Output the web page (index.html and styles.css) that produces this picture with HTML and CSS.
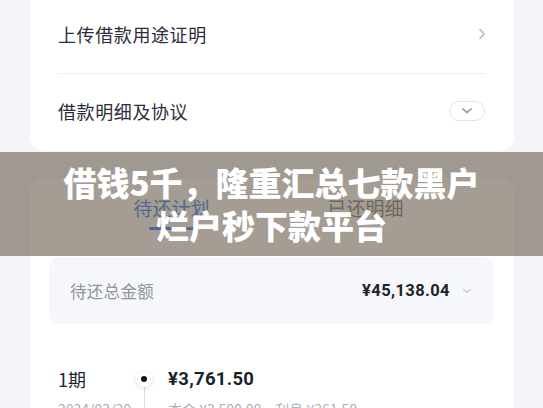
FILE: index.html
```html
<!DOCTYPE html>
<html lang="zh-CN">
<head>
<meta charset="utf-8">
<title>借款详情</title>
<link rel="stylesheet" href="styles.css">
</head>
<body>
<div class="page">
  <section class="card card-top">
    <div class="row row-first">
      <span class="row-label">上传借款用途证明</span>
      <svg class="chev-right" width="8" height="12" viewBox="0 0 8 12"><path d="M2 1.5 L6 6 L2 10.5" fill="none" stroke="#b8bcc7" stroke-width="1.6" stroke-linecap="round" stroke-linejoin="round"/></svg>
    </div>
    <div class="row row-second">
      <span class="row-label">借款明细及协议</span>
      <span class="pill"><svg width="12" height="8" viewBox="0 0 12 8"><path d="M2 2 L6 5.5 L10 2" fill="none" stroke="#a2a7b4" stroke-width="2" stroke-linecap="round" stroke-linejoin="round"/></svg></span>
    </div>
  </section>

  <section class="card card-plan">
    <div class="tabs">
      <div class="tab tab-active">待还计划<span class="tab-bar"></span></div>
      <div class="tab">已还明细</div>
    </div>
    <div class="summary">
      <span class="summary-label">待还总金额</span>
      <span class="summary-value">¥45,138.04
        <svg class="chev-down" width="10" height="6" viewBox="0 0 10 6"><path d="M1.5 1.5 L5 4.3 L8.5 1.5" fill="none" stroke="#c9cdd6" stroke-width="1.4" stroke-linecap="round" stroke-linejoin="round"/></svg>
      </span>
    </div>
    <div class="period">
      <div class="period-name">1期</div>
      <div class="period-axis"><span class="dot-ring"><span class="dot"></span></span><span class="axis-line"></span></div>
      <div class="period-amount">¥3,761.50</div>
      <div class="period-date">2024/03/20</div>
      <div class="period-detail"><span>本金 ¥3,500.00</span><span>利息 ¥261.50</span></div>
    </div>
  </section>
</div>

<div class="banner">
  <div class="banner-line">借钱5千，隆重汇总七款黑户</div>
  <div class="banner-line">烂户秒下款平台</div>
</div>
</body>
</html>
```

FILE: styles.css
```css
* { box-sizing: border-box; }

html, body {
  margin: 0;
  padding: 0;
  background: #f3f5f9;
  font-family: "Noto Sans CJK SC", "Noto Sans", sans-serif;
  overflow: hidden;
}

.page {
  padding: 0 29px 0 30px;
}

.card {
  background: #ffffff;
}

.card-top {
  border-radius: 0 0 14px 14px;
  padding: 0 29px 0 28px;
}

.row {
  display: flex;
  align-items: center;
  justify-content: space-between;
}

.row-first {
  height: 74px;
  padding-bottom: 6px;
  border-bottom: 1px solid #eceef2;
}

.row-second {
  height: 77px;
  padding-bottom: 3px;
}

.row-label {
  font-size: 18px;
  letter-spacing: 0.6px;
  color: #2a2e3b;
  line-height: 24px;
}

.chev-right {
  margin-right: -1px;
}

.pill {
  width: 36px;
  height: 20px;
  border: 1px solid #e1e3ea;
  border-radius: 10px;
  display: flex;
  align-items: center;
  justify-content: center;
}

.card-plan {
  margin-top: 27px;
  border-radius: 14px;
  padding: 0 20px 0 19px;
  height: 260px;
}

.tabs {
  display: flex;
  justify-content: center;
  padding: 20px 0 27px 0;
  margin-left: -6px;
}

.tab {
  width: 194px;
  display: flex;
  flex-direction: column;
  align-items: center;
  font-size: 19px;
  line-height: 20px;
  color: #70757e;
}

.tab-active {
  color: #2a7cf2;
}

.tab-bar {
  margin-top: 9px;
  width: 46px;
  height: 3px;
  border-radius: 2px;
  background: #2a7cf2;
}

.summary {
  height: 67px;
  background: #f6f7fa;
  border-radius: 10px;
  padding: 0 22px 0 21px;
  display: flex;
  align-items: center;
  justify-content: space-between;
}

.summary-label {
  font-size: 16.5px;
  color: #8f939c;
  letter-spacing: 0.3px;
}

.summary-value {
  font-family: "Roboto", "Liberation Sans", sans-serif;
  font-weight: 700;
  font-size: 16.5px;
  letter-spacing: 0.4px;
  color: #1f2229;
  display: flex;
  align-items: center;
  gap: 12px;
}

.period {
  margin-top: 41px;
  padding-left: 9px;
  display: grid;
  grid-template-columns: 76px 20px 1fr;
  grid-template-rows: 28px 20px;
  row-gap: 6px;
  align-items: center;
}

.period-name {
  font-size: 18px;
  color: #23262e;
}

.period-axis {
  grid-column: 2;
  grid-row: 1 / span 2;
  align-self: stretch;
  position: relative;
  display: flex;
  justify-content: center;
  align-items: flex-start;
  padding-top: 6px;
}

.dot-ring {
  width: 16px;
  height: 16px;
  border-radius: 50%;
  background: #fff;
  box-shadow: 0 1px 4px rgba(60, 80, 120, 0.2);
  display: flex;
  align-items: center;
  justify-content: center;
  position: relative;
  z-index: 1;
}

.dot {
  width: 6px;
  height: 6px;
  border-radius: 50%;
  background: #111318;
}

.axis-line {
  position: absolute;
  left: 9.5px;
  top: 14px;
  bottom: 0;
  width: 1px;
  background: #d9dce3;
}

.period-amount {
  padding-left: 14px;
  font-family: "Roboto", "Liberation Sans", sans-serif;
  font-weight: 700;
  font-size: 18.5px;
  letter-spacing: 0.3px;
  color: #1c1f26;
}

.period-date,
.period-detail {
  grid-row: 2;
  font-size: 14px;
  line-height: 20px;
  color: #a9adb5;
  align-self: start;
}

.period-date {
  grid-column: 1;
}

.period-detail {
  grid-column: 3;
  padding-left: 14px;
  display: flex;
  gap: 14px;
}

.banner {
  position: absolute;
  top: 152px;
  left: 0;
  right: 0;
  height: 104px;
  background: rgba(105, 92, 75, 0.6);
  display: flex;
  flex-direction: column;
  align-items: center;
  justify-content: center;
}

.banner-line {
  font-family: "Noto Sans CJK SC", sans-serif;
  font-weight: 900;
  font-size: 33px;
  line-height: 43px;
  color: #ffffff;
  white-space: nowrap;
}
```
